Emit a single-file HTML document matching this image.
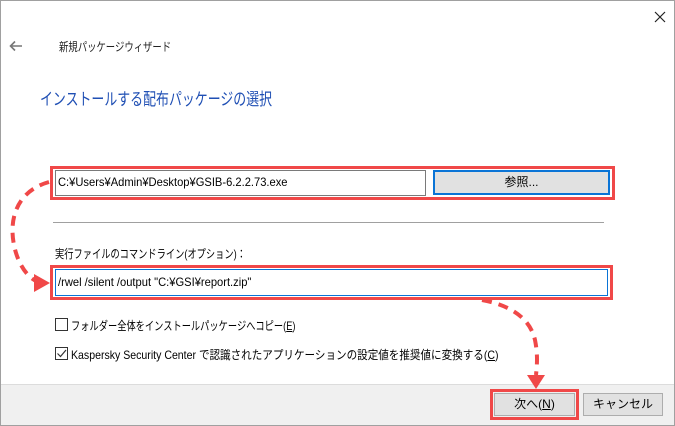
<!DOCTYPE html>
<html><head><meta charset="utf-8"><style>
*{margin:0;padding:0;box-sizing:border-box}
body{width:675px;height:426px;overflow:hidden;background:#fff;font-family:"Liberation Sans","Noto Sans CJK JP",sans-serif;font-size:12px;color:#000;position:relative}
.a{position:absolute}
.win{left:0;top:0;width:675px;height:426px;border:1px solid #a0a0a0}
.footer{left:1px;top:384px;width:673px;height:41px;background:#f0f0f0;border-top:1px solid #dcdcdc}
.red{border:3px solid #f04848}
.t{white-space:nowrap;transform-origin:0 50%}
</style></head><body>
<div class="a win"></div>
<div class="a footer"></div>
<svg class="a" style="left:653px;top:10px" width="14" height="14"><path d="M2 2L12 12M12 2L2 12" stroke="#222" stroke-width="1.2"/></svg>
<svg class="a" style="left:9px;top:40px" width="14" height="12"><path d="M13 6H2M6 1.5L1.5 6 6 10.5" stroke="#777" stroke-width="1.6" fill="none"/></svg>
<div class="a t" style="left:59px;top:38px;font-size:12px;color:#222;transform:scaleX(0.78)">新規パッケージウィザード</div>
<div class="a t" style="left:40px;top:85px;font-size:17px;color:#1f4fb4;transform:scaleX(0.76)">インストールする配布パッケージの選択</div>

<div class="a red" style="left:50px;top:166px;width:565px;height:34px"></div>
<div class="a" style="left:55px;top:170px;width:371px;height:26px;border:1px solid #7a7a7a"></div>
<div class="a t" style="left:58px;top:175px;transform:scaleX(0.93)">C:¥Users¥Admin¥Desktop¥GSIB-6.2.2.73.exe</div>
<div class="a" style="left:433px;top:170px;width:177px;height:25px;border:2px solid #0a74d6;background:#e1e1e1;text-align:center;line-height:21px">参照...</div>

<div class="a" style="left:53px;top:222px;width:551px;height:1px;background:#a0a0a0"></div>
<div class="a t" style="left:55px;top:245px;transform:scaleX(0.77)">実行ファイルのコマンドライン(オプション)：</div>

<div class="a red" style="left:50px;top:265px;width:563px;height:35px"></div>
<div class="a" style="left:55px;top:269px;width:553px;height:27px;border:1px solid #0a74d6"></div>
<div class="a t" style="left:58px;top:275px;transform:scaleX(0.93)">/rwel /silent /output "C:¥GSI¥report.zip"</div>

<div class="a" style="left:55px;top:318px;width:13px;height:13px;border:1px solid #333"></div>
<div class="a t" style="left:71px;top:317px;transform:scaleX(0.77)">フォルダー全体をインストールパッケージへコピー(<u>E</u>)</div>
<div class="a" style="left:55px;top:347px;width:13px;height:13px;border:1px solid #333"></div>
<svg class="a" style="left:56px;top:348px" width="11" height="11"><path d="M1.5 5.5L4.5 8.5 10 2" stroke="#333" stroke-width="1.2" fill="none"/></svg>
<div class="a t" style="left:71px;top:346px;transform:scaleX(0.88)">Kaspersky Security Center で認識されたアプリケーションの設定値を推奨値に変換する(<u>C</u>)</div>

<div class="a red" style="left:490px;top:389px;width:89px;height:31px"></div>
<div class="a" style="left:494px;top:393px;width:81px;height:23px;border:1px solid #adadad;background:#e1e1e1;text-align:center;line-height:21px">次へ(<u>N</u>)</div>
<div class="a" style="left:583px;top:393px;width:80px;height:23px;border:1px solid #adadad;background:#e1e1e1;text-align:center;line-height:21px">キャンセル</div>

<svg class="a" style="left:0;top:0" width="675" height="426">
<path d="M49 182 C20 190 8 215 14 245 C18 265 28 278 38 282" stroke="#f04848" stroke-width="4" fill="none" stroke-dasharray="10 7"/>
<path d="M34 274L50 283 34 292Z" fill="#f04848"/>
<path d="M482 300 C510 305 530 318 535 340 C538 355 537 365 536 375" stroke="#f04848" stroke-width="4" fill="none" stroke-dasharray="10 7"/>
<path d="M527 375L536 389 545 375Z" fill="#f04848"/>
</svg>
</body></html>
